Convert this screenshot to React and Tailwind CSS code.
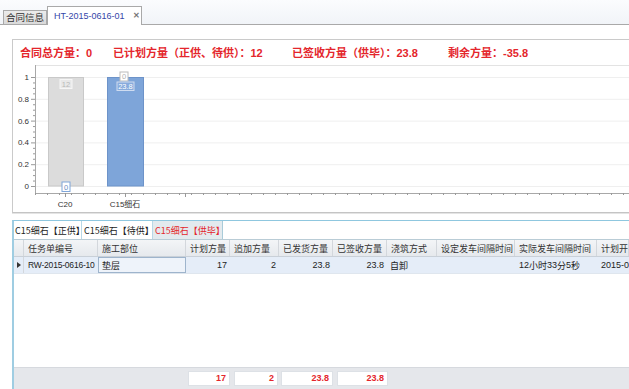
import React from "react";

const FONT = { fontFamily: '"Liberation Sans", "Noto Sans CJK SC", sans-serif' };
const CJK = { fontFamily: '"Noto Sans CJK SC", "Liberation Sans", sans-serif' };

function Chart() {
  const y0 = 121;
  const step = 21.8;
  const majors = [1, 0.8, 0.6, 0.4, 0.2, 0];
  const minors = [];
  for (let i = 0; i <= 20; i++) minors.push(y0 - (i * step) / 4);
  const xt = [];
  for (let x = 22; x < 620; x += 12) xt.push(x);
  return (
    <svg width="616" height="146" className="block" style={{ fontFamily: '"Liberation Sans", "Noto Sans CJK SC", sans-serif' }}>
      <line x1="22" y1="0.5" x2="616" y2="0.5" stroke="#e3e3e3" />
      {majors.map((v, i) => (
        <line key={"g" + i} x1="22" x2="616" y1={y0 - i * step + 0.5} y2={y0 - i * step + 0.5} stroke="#efefef" />
      ))}
      {majors.map((v, i) => (
        <text key={"l" + i} x="16" y={12 + i * step + 3} fontSize="8" textAnchor="end" fill="#333">
          {v}
        </text>
      ))}
      {minors.map((y, i) => (
        <line key={"m" + i} x1={i % 4 === 0 ? 18 : 20} x2="22" y1={y + 0.5} y2={y + 0.5} stroke="#999" />
      ))}
      <line x1="22.5" y1="0" x2="22.5" y2="128" stroke="#a8a8a8" />
      <line x1="22" y1="128.5" x2="616" y2="128.5" stroke="#a8a8a8" />
      {xt.map((x, i) => (
        <line key={"x" + i} x1={x + 0.5} x2={x + 0.5} y1="128" y2="130" stroke="#999" />
      ))}
      <line x1="52.5" x2="52.5" y1="128" y2="132" stroke="#999" />
      <line x1="112.5" x2="112.5" y1="128" y2="132" stroke="#999" />
      <line x1="172.5" x2="172.5" y1="128" y2="132" stroke="#999" />
      {/* bars */}
      <rect x="35.5" y="12.5" width="35" height="108.5" fill="#dcdcdc" stroke="#c9c9c9" />
      <rect x="94.5" y="12.5" width="36" height="108.5" fill="#7ea5d9" stroke="#6d93c9" />
      {/* labels */}
      <rect x="47" y="14.5" width="12" height="9" fill="#e8e8e8" stroke="#f6f6f6" />
      <text x="53" y="21.5" fontSize="7.5" textAnchor="middle" fill="#b8b8b8">12</text>
      <rect x="49" y="117" width="8" height="9.5" fill="#ffffff" stroke="#7ea5d9" />
      <text x="53" y="124.5" fontSize="7.5" textAnchor="middle" fill="#6a8dc2">0</text>
      <rect x="107" y="7" width="8" height="9" fill="#ffffff" stroke="#bcbcbc" />
      <text x="111" y="14" fontSize="7.5" textAnchor="middle" fill="#b0b0b0">0</text>
      <rect x="104" y="17" width="17" height="8.5" fill="#88abdc" stroke="#cfdcf0" />
      <text x="112.5" y="24" fontSize="7.5" textAnchor="middle" fill="#ffffff">23.8</text>
      <text x="52" y="142" fontSize="8" textAnchor="middle" fill="#333">C20</text>
      <text x="112" y="142" fontSize="8" textAnchor="middle" fill="#333">C15细石</text>
    </svg>
  );
}

const cols = [
  { w: 10, h: "" },
  { w: 74, h: "任务单编号" },
  { w: 88, h: "施工部位" },
  { w: 44, h: "计划方量" },
  { w: 49, h: "追加方量" },
  { w: 54, h: "已发货方量" },
  { w: 54, h: "已签收方量" },
  { w: 50, h: "浇筑方式" },
  { w: 78, h: "设定发车间隔时间" },
  { w: 82, h: "实际发车间隔时间" },
  { w: 32, h: "计划开" },
];

export default function App() {
  return (
    <div className="w-[629px] h-[389px] overflow-hidden bg-white flex flex-col" style={FONT}>
      {/* top tab strip */}
      <div className="h-[25px] shrink-0 flex items-end pl-[3px] border-b border-[#a9a9a9] bg-gradient-to-b from-[#fbfcfe] to-[#f1f4f8]">
        <div className="w-[44px] h-[14px] flex items-center justify-center border border-b-0 border-[#a9a9a9] bg-gradient-to-b from-[#ececec] to-[#d9d9d9] text-[9.5px] text-[#333] leading-none whitespace-nowrap" style={CJK}>
          合同信息
        </div>
        <div className="w-[95px] h-[19px] -mb-px flex items-center pl-[6px] border border-b-0 border-[#a9a9a9] bg-white whitespace-nowrap">
          <span className="text-[9px] text-[#3446a8] leading-none">HT-2015-0616-01</span>
          <span className="ml-[8px] text-[8px] text-[#777] leading-none font-bold">✕</span>
        </div>
      </div>

      {/* chart panel */}
      <div className="mt-[14px] ml-[12px] w-[625px] h-[174px] shrink-0 border border-[#cacaca] border-b-[#c4c4c4] shadow-[0_1px_0_#e4e4e4] flex flex-col">
        <div className="h-[25px] flex items-center pl-[7px] text-[11px] font-bold text-[#e4262c] leading-none whitespace-nowrap" style={CJK}>
          <span className="w-[93px]">合同总方量：<span style={FONT}>0</span></span>
          <span className="w-[179px]">已计划方量（正供、待供）：<span style={FONT}>12</span></span>
          <span className="w-[156px]">已签收方量（供毕）：<span style={FONT}>23.8</span></span>
          <span>剩余方量：<span style={FONT}>-35.8</span></span>
        </div>
        <Chart />
      </div>

      {/* grid panel */}
      <div className="mt-[7px] ml-[12px] flex-1 flex flex-col border-t border-l-2 border-[#9fcde2] border-t-[#8fc7df]">
        <div className="h-[19px] shrink-0 flex border-b border-[#b9ccd6] text-[9px] leading-none whitespace-nowrap" style={CJK}>
          <div className="w-[68px] flex items-center pl-[1px] border-r border-[#b8d8e6] text-[#222]">C15细石【正供】</div>
          <div className="w-[71px] flex items-center pl-[2px] border-r border-[#b8d8e6] text-[#222]">C15细石【待供】</div>
          <div className="w-[70px] flex items-center pl-[2px] border-r border-[#a9cbd9] bg-[#e3eaee] text-[#e4262c]">C15细石【供毕】</div>
        </div>
        {/* header */}
        <div className="h-[17px] shrink-0 flex bg-gradient-to-b from-[#f3f5f7] to-[#e6e9ed] border-b border-[#c9d0d8] text-[9px] text-[#333] leading-none" style={CJK}>
          {cols.map((c, i) => (
            <div key={i} className="shrink-0 flex items-center pl-[4px] border-r border-[#d3d7dc] whitespace-nowrap overflow-hidden" style={{ width: c.w }}>
              {c.h}
            </div>
          ))}
        </div>
        {/* data row */}
        <div className="h-[17px] shrink-0 flex bg-[#e5edf8] border-b border-[#dfe6ee] text-[9px] text-[#222] leading-none">
          <div className="w-[10px] shrink-0 flex items-center justify-center border-r border-[#d3d7dc]">
            <svg width="4" height="6"><path d="M0 0 L4 3 L0 6 Z" fill="#333" /></svg>
          </div>
          <div className="w-[74px] shrink-0 flex items-center pl-[4px] text-[8.5px] tracking-[-0.2px] whitespace-nowrap">RW-2015-0616-10</div>
          <div className="w-[88px] shrink-0 flex items-center pl-[3px] border border-[#9eb4cc] bg-[#eef3fa]" style={CJK}>垫层</div>
          <div className="w-[44px] shrink-0 flex items-center justify-end pr-[3px]">17</div>
          <div className="w-[49px] shrink-0 flex items-center justify-end pr-[3px]">2</div>
          <div className="w-[54px] shrink-0 flex items-center justify-end pr-[3px]">23.8</div>
          <div className="w-[54px] shrink-0 flex items-center justify-end pr-[3px]">23.8</div>
          <div className="w-[50px] shrink-0 flex items-center pl-[3px]" style={CJK}>自卸</div>
          <div className="w-[78px] shrink-0"></div>
          <div className="w-[82px] shrink-0 flex items-center pl-[4px] whitespace-nowrap"><span>12</span><span style={CJK}>小时</span><span>33</span><span style={CJK}>分</span><span>5</span><span style={CJK}>秒</span></div>
          <div className="w-[32px] shrink-0 flex items-center pl-[4px] whitespace-nowrap overflow-hidden">2015-0</div>
        </div>
        <div className="flex-1 bg-white"></div>
        {/* footer */}
        <div className="h-[22px] shrink-0 flex items-center bg-[#e5e7eb] border-t border-[#d6d9de] text-[9px] font-bold text-[#e4262c] leading-none">
          <div className="w-[174px] shrink-0"></div>
          <div className="w-[42px] h-[15px] shrink-0 bg-white border border-[#dde1e6] flex items-center justify-end pr-[3px]">17</div>
          <div className="w-[44px] h-[15px] shrink-0 ml-[4px] bg-white border border-[#dde1e6] flex items-center justify-end pr-[3px]">2</div>
          <div className="w-[52px] h-[15px] shrink-0 ml-[3px] bg-white border border-[#dde1e6] flex items-center justify-end pr-[3px]">23.8</div>
          <div className="w-[51px] h-[15px] shrink-0 ml-[4px] bg-white border border-[#dde1e6] flex items-center justify-end pr-[3px]">23.8</div>
        </div>
      </div>
    </div>
  );
}
